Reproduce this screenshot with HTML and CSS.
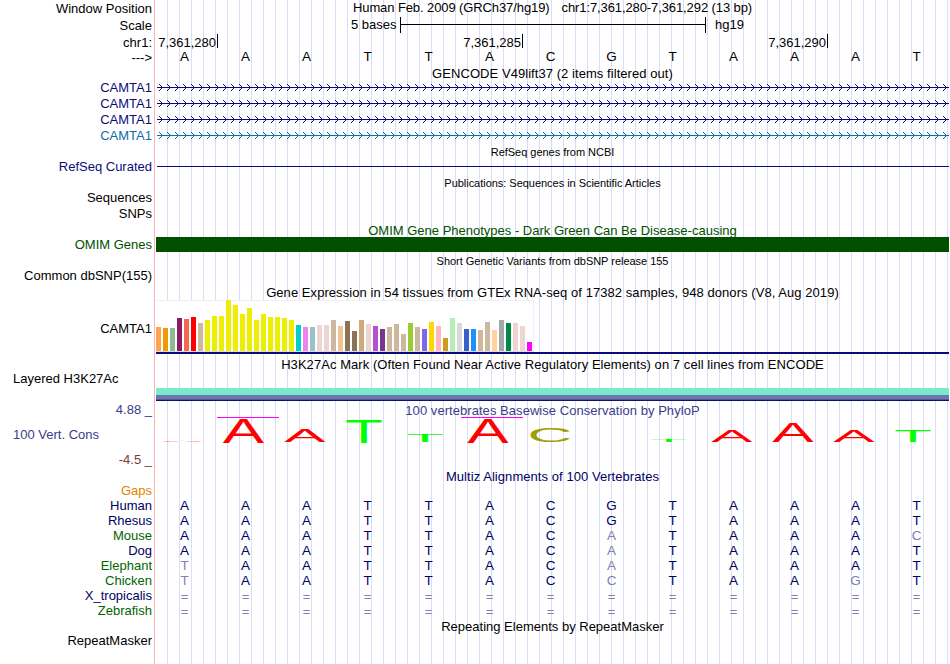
FILE: index.html
```
<!DOCTYPE html>
<html lang="en">
<head>
  <meta charset="UTF-8">
  <title>Human chr1:7,361,280-7,361,292</title>
  <link rel="stylesheet" href="styles.css">
</head>
<body>
  <div class="browser">
    <div class="row position">
      <div class="label">Window Position</div>
      <div class="title"><span class="assembly">Human Feb. 2009 (GRCh37/hg19)</span><span>chr1:7,361,280-7,361,292 (13 bp)</span></div>
    </div>
    <div class="row scale">
      <div class="label">Scale</div>
      <div class="scale-track">
        <span class="scale-size">5 bases</span>
        <span class="scale-bar"></span>
        <span>hg19</span>
      </div>
    </div>
    <div class="row ruler">
      <div class="label">chr1:</div>
      <div class="ticks">
        <span class="tick">7,361,280</span>
        <span class="tick">7,361,285</span>
        <span class="tick">7,361,290</span>
      </div>
    </div>
    <div class="row sequence">
      <div class="label">---&gt;</div>
      <div class="bases" data-seq="AAATTACGTAAAT"></div>
    </div>

    <div class="track-title">GENCODE V49lift37 (2 items filtered out)</div>
    <div class="row gene"><div class="label">CAMTA1</div><div class="transcript"></div></div>
    <div class="row gene"><div class="label">CAMTA1</div><div class="transcript"></div></div>
    <div class="row gene"><div class="label">CAMTA1</div><div class="transcript"></div></div>
    <div class="row gene alt"><div class="label">CAMTA1</div><div class="transcript"></div></div>

    <div class="track-title small">RefSeq genes from NCBI</div>
    <div class="row gene"><div class="label">RefSeq Curated</div><div class="refseq"></div></div>

    <div class="track-title small">Publications: Sequences in Scientific Articles</div>
    <div class="row"><div class="label">Sequences</div></div>
    <div class="row"><div class="label">SNPs</div></div>

    <div class="track-title green omim-title">OMIM Gene Phenotypes - Dark Green Can Be Disease-causing</div>
    <div class="row green"><div class="label">OMIM Genes</div><div class="omim"></div></div>

    <div class="track-title small">Short Genetic Variants from dbSNP release 155</div>
    <div class="row"><div class="label">Common dbSNP(155)</div></div>

    <div class="track-title gtex-title">Gene Expression in 54 tissues from GTEx RNA-seq of 17382 samples, 948 donors (V8, Aug 2019)</div>
    <div class="row gtex">
      <div class="label">CAMTA1</div>
      <div class="gtex-track"><div class="bars" id="bars"></div></div>
    </div>

    <div class="track-title">H3K27Ac Mark (Often Found Near Active Regulatory Elements) on 7 cell lines from ENCODE</div>
    <div class="row layered">
      <div class="label left">Layered H3K27Ac</div>
      <div class="signal"></div>
    </div>

    <div class="row cons">
      <div class="cons-labels">
        <span class="limit">4.88 _</span>
        <span class="name">100 Vert. Cons</span>
        <span class="limit min">-4.5 _</span>
      </div>
      <div>
        <div class="title">100 vertebrates Basewise Conservation by PhyloP</div>
        <svg class="logo" id="logo" width="793" height="34" viewBox="156 415 793 34"></svg>
      </div>
    </div>

    <div class="track-title navy">Multiz Alignments of 100 Vertebrates</div>
    <div class="row species gaps"><div class="label">Gaps</div></div>
    <div class="row species"><div class="label">Human</div><div class="bases" data-seq="AAATTACGTAAAT"></div></div>
    <div class="row species"><div class="label">Rhesus</div><div class="bases" data-seq="AAATTACGTAAAT"></div></div>
    <div class="row species far"><div class="label">Mouse</div><div class="bases" data-seq="AAATTACaTAAAc"></div></div>
    <div class="row species"><div class="label">Dog</div><div class="bases" data-seq="AAATTACaTAAAT"></div></div>
    <div class="row species far"><div class="label">Elephant</div><div class="bases" data-seq="tAATTACaTAAAT"></div></div>
    <div class="row species far"><div class="label">Chicken</div><div class="bases" data-seq="tAATTACcTAAgT"></div></div>
    <div class="row species"><div class="label">X_tropicalis</div><div class="bases gap" data-seq="============="></div></div>
    <div class="row species far"><div class="label">Zebrafish</div><div class="bases gap" data-seq="============="></div></div>

    <div class="track-title repeat-title">Repeating Elements by RepeatMasker</div>
    <div class="row"><div class="label">RepeatMasker</div></div>
  </div>

  <script>
    // lower case letters and "=" are mismatches, drawn faded
    document.querySelectorAll('.bases').forEach(function (el) {
      el.dataset.seq.split('').forEach(function (c) {
        const span = document.createElement('span');
        span.textContent = c.toUpperCase();
        if (c !== c.toUpperCase() || c === '=') span.className = 'diff';
        el.appendChild(span);
      });
    });

    // intron lines with strand arrows every 8px
    document.querySelectorAll('.transcript').forEach(function (el) {
      let d = '';
      for (let x = 3; x < 793; x += 8) {
        d += 'M' + x + ' 4l3.5 3.5l-3.5 3.5';
      }
      el.innerHTML = '<svg width="793" height="16"><path class="arrows" d="' + d + '"/><path class="line" d="M1 7.5H793"/></svg>';
    });

    // GTEx tissues: [height, color]
    const tissues = [
      [24, '#ffa54f'], [23, '#ee9a00'], [23, '#8fbc8f'], [33, '#8b1c62'], [32, '#ee6a50'], [34, '#ff0000'],
      [28, '#cdb79e'], [31, '#eeee00'], [35, '#eeee00'], [35, '#eeee00'], [51, '#eeee00'], [46, '#eeee00'],
      [37, '#eeee00'], [43, '#eeee00'], [31, '#eeee00'], [37, '#eeee00'], [34, '#eeee00'], [34, '#eeee00'],
      [33, '#eeee00'], [31, '#eeee00'], [26, '#00cdcd'], [24, '#ee82ee'], [24, '#9ac0cd'], [26, '#eed5d2'],
      [26, '#eed5d2'], [31, '#cdb79e'], [25, '#eec591'], [30, '#8b7355'], [20, '#8b7355'], [31, '#cdaa7d'],
      [27, '#eed5d2'], [25, '#b452cd'], [22, '#7a378b'], [24, '#cdb79e'], [27, '#cdb79e'], [17, '#cdb79e'],
      [28, '#9acd32'], [24, '#cdb79e'], [22, '#7a67ee'], [29, '#ffd700'], [25, '#ffb6c1'], [13, '#cd9b1d'],
      [33, '#b4eeb4'], [28, '#d9d9d9'], [22, '#3a5fcd'], [22, '#1e90ff'], [21, '#cdb79e'], [29, '#cdb79e'],
      [21, '#ffd39b'], [31, '#a6a6a6'], [28, '#008b45'], [28, '#eed5d2'], [25, '#eed5d2'], [9, '#ff00ff']
    ];
    document.getElementById('bars').innerHTML = tissues.map(function (t) {
      return '<span class="bar" style="height:' + t[0] + 'px;background:' + t[1] + '"></span>';
    }).join('');

    // conservation logo: [letter, center, top, bottom]
    const letters = [
      ['A', 182.5, 441, 442], ['A', 243.5, 419, 443], ['A', 305, 429, 442], ['T', 364, 420, 443],
      ['T', 425, 434, 442], ['A', 488, 419, 443], ['C', 550, 428, 442], ['T', 669, 439, 442],
      ['A', 732, 431, 442], ['A', 793, 423, 442], ['A', 854, 431, 442], ['T', 913, 431, 442]
    ];
    let logo = '';
    letters.forEach(function (l) {
      const sy = (l[3] - l[2]) / 42.6;
      logo += '<text class="nt-' + l[0] + '" transform="translate(' + l[1] + ' ' + l[3] + ') scale(1 ' + sy.toFixed(3) + ')">' + l[0] + '</text>';
    });
    // scores clipped at the top of the range
    logo += '<path class="clip" d="M217 417.5H279M461 417.5H523"/>';
    document.getElementById('logo').innerHTML = logo;
  </script>
</body>
</html>
```
FILE: styles.css
```
body {
  margin: 0;
  background: #fff;
  color: #000;
  font-family: "Liberation Sans", Arial, Helvetica, sans-serif;
  font-size: 13px;
  line-height: 15px;
}

.browser {
  width: 949px;
  height: 664px;
  overflow: hidden;
  background:
    linear-gradient(#ffb4b4, #ffb4b4) 154px 0 / 1px 100% no-repeat,
    repeating-linear-gradient(to right, #dcdcf8 0 1px, transparent 1px 12px) 167px 0 / 782px 100% no-repeat;
}

.row {
  display: grid;
  grid-template-columns: 152px 793px;
  column-gap: 4px;
  height: 16px;
  white-space: nowrap;
}

.label {
  text-align: right;
}

.label.left {
  text-align: left;
  padding-left: 13px;
}

.title {
  text-align: center;
}

.track-title {
  box-sizing: border-box;
  height: 15px;
  margin-left: 156px;
  padding-top: 1px;
  text-align: center;
  white-space: nowrap;
  letter-spacing: 0.06px;
}

.track-title.small {
  font-size: 11px;
  letter-spacing: -0.03px;
}

.omim-title,
.repeat-title {
  letter-spacing: 0;
}

/* ruler */
.position {
  height: 17px;
}

.position .label,
.scale .label,
.ruler .label,
.sequence .label {
  padding-top: 1px;
}

.position .title {
  letter-spacing: -0.1px;
}

.assembly {
  margin-right: 12px;
}

.scale {
  height: 17px;
}

.scale-track {
  display: flex;
  padding-left: 195px;
}

.scale-size {
  width: 49px;
}

.scale-bar {
  box-sizing: border-box;
  width: 306px;
  height: 16px;
  margin-right: 9px;
  border-left: 1px solid #000;
  border-right: 1px solid #000;
  background: linear-gradient(#000, #000) 0 7px / 100% 1px no-repeat;
}

.ruler {
  height: 15px;
}

.ticks {
  display: flex;
}

.tick {
  box-sizing: border-box;
  width: 305px;
  height: 14px;
  padding: 1px 1px 0 0;
  border-right: 1px solid #000;
  text-align: right;
}

.tick:first-child {
  width: 62px;
}

.bases {
  display: grid;
  grid-template-columns: repeat(13, 61px);
  margin-left: -2px;
  margin-right: 2px;
  font-size: 13.5px;
}

.bases span {
  text-align: center;
}

.bases.gap {
  padding-top: 1px;
  font-size: 13px;
}

/* genes */
.gene {
  color: #0c0c78;
}

.alt {
  color: #0c6eaa;
}

.transcript svg {
  display: block;
}

.arrows,
.line {
  fill: none;
  stroke: currentColor;
}

.refseq {
  height: 1px;
  margin: 7px 0 0 1px;
  background: #0c0c78;
}

.green {
  color: #005000;
}

.omim {
  height: 15px;
  background: #005000;
}

/* expression */
.gtex-title {
  height: 16px;
}

.gtex {
  height: 56px;
}

.gtex .label {
  padding-top: 21px;
}

.gtex-track {
  height: 52px;
  border-bottom: 2px solid #0c0c78;
}

.bars {
  box-sizing: border-box;
  display: flex;
  align-items: flex-end;
  gap: 2px;
  width: 378px;
  height: 52px;
  background: linear-gradient(#f0f0f0, #f0f0f0) 0 0 / 100% 1px no-repeat, #fff;
  border-right: 1px solid #f0f0f0;
  border-bottom: 1px solid #dcdcdc;
}

.bar {
  flex: none;
  width: 5px;
}

/* H3K27Ac */
.layered {
  height: 31px;
}

.signal {
  height: 13px;
  margin-top: 17px;
  background: linear-gradient(#77ebcc 0 7px, #7474ac 7px 11px, #4a5a9c 11px 12px, #0c1464 12px);
}

/* conservation */
.cons {
  height: 66px;
  color: #3c3c8c;
}

.cons .title {
  padding-top: 1px;
  letter-spacing: 0.05px;
}

.cons-labels {
  display: flex;
  flex-direction: column;
  gap: 10px;
}

.limit {
  text-align: right;
}

.limit.min {
  color: #783c3c;
}

.name {
  padding-left: 13px;
}

.logo {
  display: block;
  margin-top: -3px;
  overflow: visible;
}

.logo text {
  font-size: 62px;
  text-anchor: middle;
}

.nt-A {
  fill: #f00;
}

.nt-T {
  fill: #0f0;
}

.nt-C {
  fill: #a0a000;
}

.clip {
  stroke: #f0f;
}

/* alignment */
.navy {
  color: #000064;
}

.species {
  height: 15px;
  color: #000064;
}

.far .label {
  color: #006400;
}

.gaps {
  color: #e68200;
}

.diff {
  color: #8080b2;
}
```
